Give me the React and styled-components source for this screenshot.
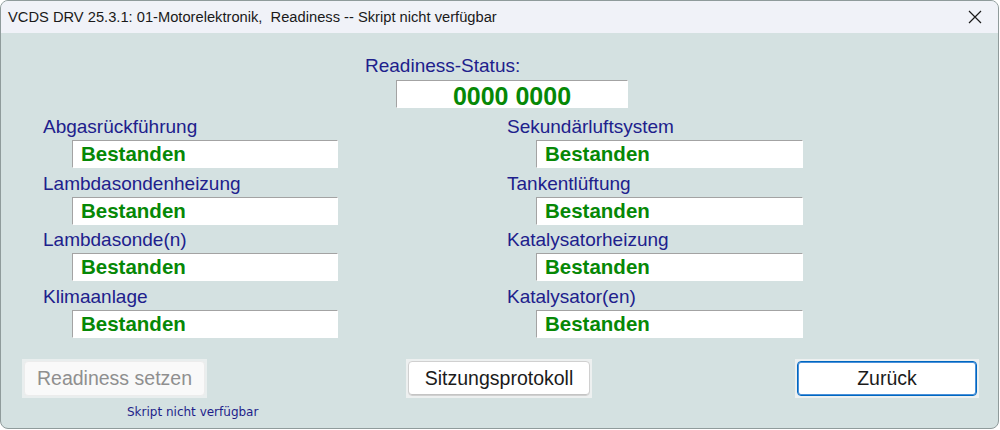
import React from 'react';
import styled, { createGlobalStyle } from 'styled-components';

const GlobalStyle = createGlobalStyle`
    html, body {
        margin: 0;
        padding: 0;
        background: #ffffff;
    }
    * {
        box-sizing: border-box;
    }
`;

const Window = styled.div`
    width: 999px;
    height: 429px;
    border: 1px solid #8f9b9b;
    border-radius: 8px;
    overflow: hidden;
    background: #d4e1e1;
    display: flex;
    flex-direction: column;
    font-family: "Liberation Sans", Arial, sans-serif;
`;

const TitleBar = styled.div`
    height: 32px;
    flex-shrink: 0;
    background: #f0f2f8;
    display: flex;
    align-items: center;
    justify-content: space-between;
    padding: 0 16px 0 7px;
`;

const Title = styled.div`
    font-size: 14.7px;
    color: #1a1a1a;
    white-space: pre;
`;

const CloseButton = styled.div`
    width: 14px;
    height: 14px;
    display: flex;
`;

const Body = styled.div`
    padding-top: 23px;
    display: flex;
    flex-direction: column;
`;

const Field = styled.div`
    display: flex;
    flex-direction: column;
    align-items: flex-start;
`;

const StatusField = styled(Field)`
    margin-left: 364px;
`;

const Label = styled.div`
    font-size: 19px;
    line-height: 20px;
    color: #20208c;
    white-space: nowrap;
`;

const ValueBox = styled.div`
    margin-left: ${p => p.$indent}px;
    margin-top: ${p => p.$gap}px;
    width: ${p => p.$width}px;
    height: 28px;
    background: #ffffff;
    border: 1px solid;
    border-color: #a3a3a3 #ffffff #ffffff #a3a3a3;
    color: #068806;
    font-weight: bold;
    white-space: nowrap;
`;

const StatusBox = styled(ValueBox)`
    font-size: 25px;
    line-height: 22px;
    padding-top: 4px;
    text-align: center;
`;

const ResultBox = styled(ValueBox)`
    font-size: 20.5px;
    line-height: 26px;
    padding-left: 8px;
`;

const Grid = styled.div`
    margin-top: 9px;
    padding-left: 42px;
    display: grid;
    grid-template-columns: 464px 1fr;
    grid-auto-flow: column;
    grid-template-rows: repeat(4, auto);
    row-gap: 5.5px;
`;

const ButtonRow = styled.div`
    margin-top: 21px;
    padding: 0 19px 0 21px;
    display: flex;
    justify-content: space-between;
    align-items: flex-start;
`;

const ButtonSlot = styled.div`
    width: ${p => p.$width}px;
    margin-left: ${p => p.$shift || 0}px;
    display: flex;
    flex-direction: column;
`;

const ButtonFrame = styled.div`
    height: 39px;
    padding: 2px;
    background: ${p => (p.$disabled ? '#e9eeee' : '#edf0f0')};
    display: flex;
`;

const Button = styled.div`
    flex: 1;
    border-radius: 4px;
    background: ${p => (p.$disabled ? '#f9f9f9' : '#ffffff')};
    border: 1px solid ${p => (p.$primary ? '#0067c0' : p.$disabled ? '#ececec' : '#d0d0d0')};
    box-shadow: ${p => (p.$primary ? 'inset 0 0 0 1px #4a90d9' : p.$disabled ? 'none' : 'inset 0 -1px 0 #c4c4c4')};
    color: ${p => (p.$disabled ? '#8f8f8f' : '#1b1b1b')};
    font-size: 19.5px;
    display: flex;
    align-items: center;
    justify-content: center;
    white-space: nowrap;
`;

const Hint = styled.div`
    margin: 7px 0 0 105px;
    font-family: "DejaVu Sans", Verdana, sans-serif;
    font-size: 12px;
    color: #1e1e8a;
    white-space: nowrap;
`;

const monitors = [
    'Abgasrückführung',
    'Lambdasondenheizung',
    'Lambdasonde(n)',
    'Klimaanlage',
    'Sekundärluftsystem',
    'Tankentlüftung',
    'Katalysatorheizung',
    'Katalysator(en)',
];

const App = () => {
    return (
        <>
            <GlobalStyle />
            <Window>
                <TitleBar>
                    <Title>VCDS DRV 25.3.1: 01-Motorelektronik,  Readiness -- Skript nicht verfügbar</Title>
                    <CloseButton>
                        <svg width="14" height="14" viewBox="0 0 14 14">
                            <path d="M1 1 L13 13 M13 1 L1 13" stroke="#1a1a1a" strokeWidth="1.2" fill="none" />
                        </svg>
                    </CloseButton>
                </TitleBar>

                <Body>
                    <StatusField>
                        <Label>Readiness-Status:</Label>
                        <StatusBox $indent={31} $gap={4} $width={232}>0000 0000</StatusBox>
                    </StatusField>

                    <Grid>
                        {monitors.map((name, i) => (
                            <Field key={name}>
                                <Label>{name}</Label>
                                <ResultBox $indent={29} $gap={3} $width={i < 4 ? 266 : 267}>Bestanden</ResultBox>
                            </Field>
                        ))}
                    </Grid>

                    <ButtonRow>
                        <ButtonSlot $width={185}>
                            <ButtonFrame $disabled>
                                <Button $disabled>Readiness setzen</Button>
                            </ButtonFrame>
                            <Hint>Skript nicht verfügbar</Hint>
                        </ButtonSlot>
                        <ButtonSlot $width={186} $shift={-4}>
                            <ButtonFrame>
                                <Button>Sitzungsprotokoll</Button>
                            </ButtonFrame>
                        </ButtonSlot>
                        <ButtonSlot $width={184}>
                            <ButtonFrame>
                                <Button $primary>Zurück</Button>
                            </ButtonFrame>
                        </ButtonSlot>
                    </ButtonRow>
                </Body>
            </Window>
        </>
    );
}

export default App;
